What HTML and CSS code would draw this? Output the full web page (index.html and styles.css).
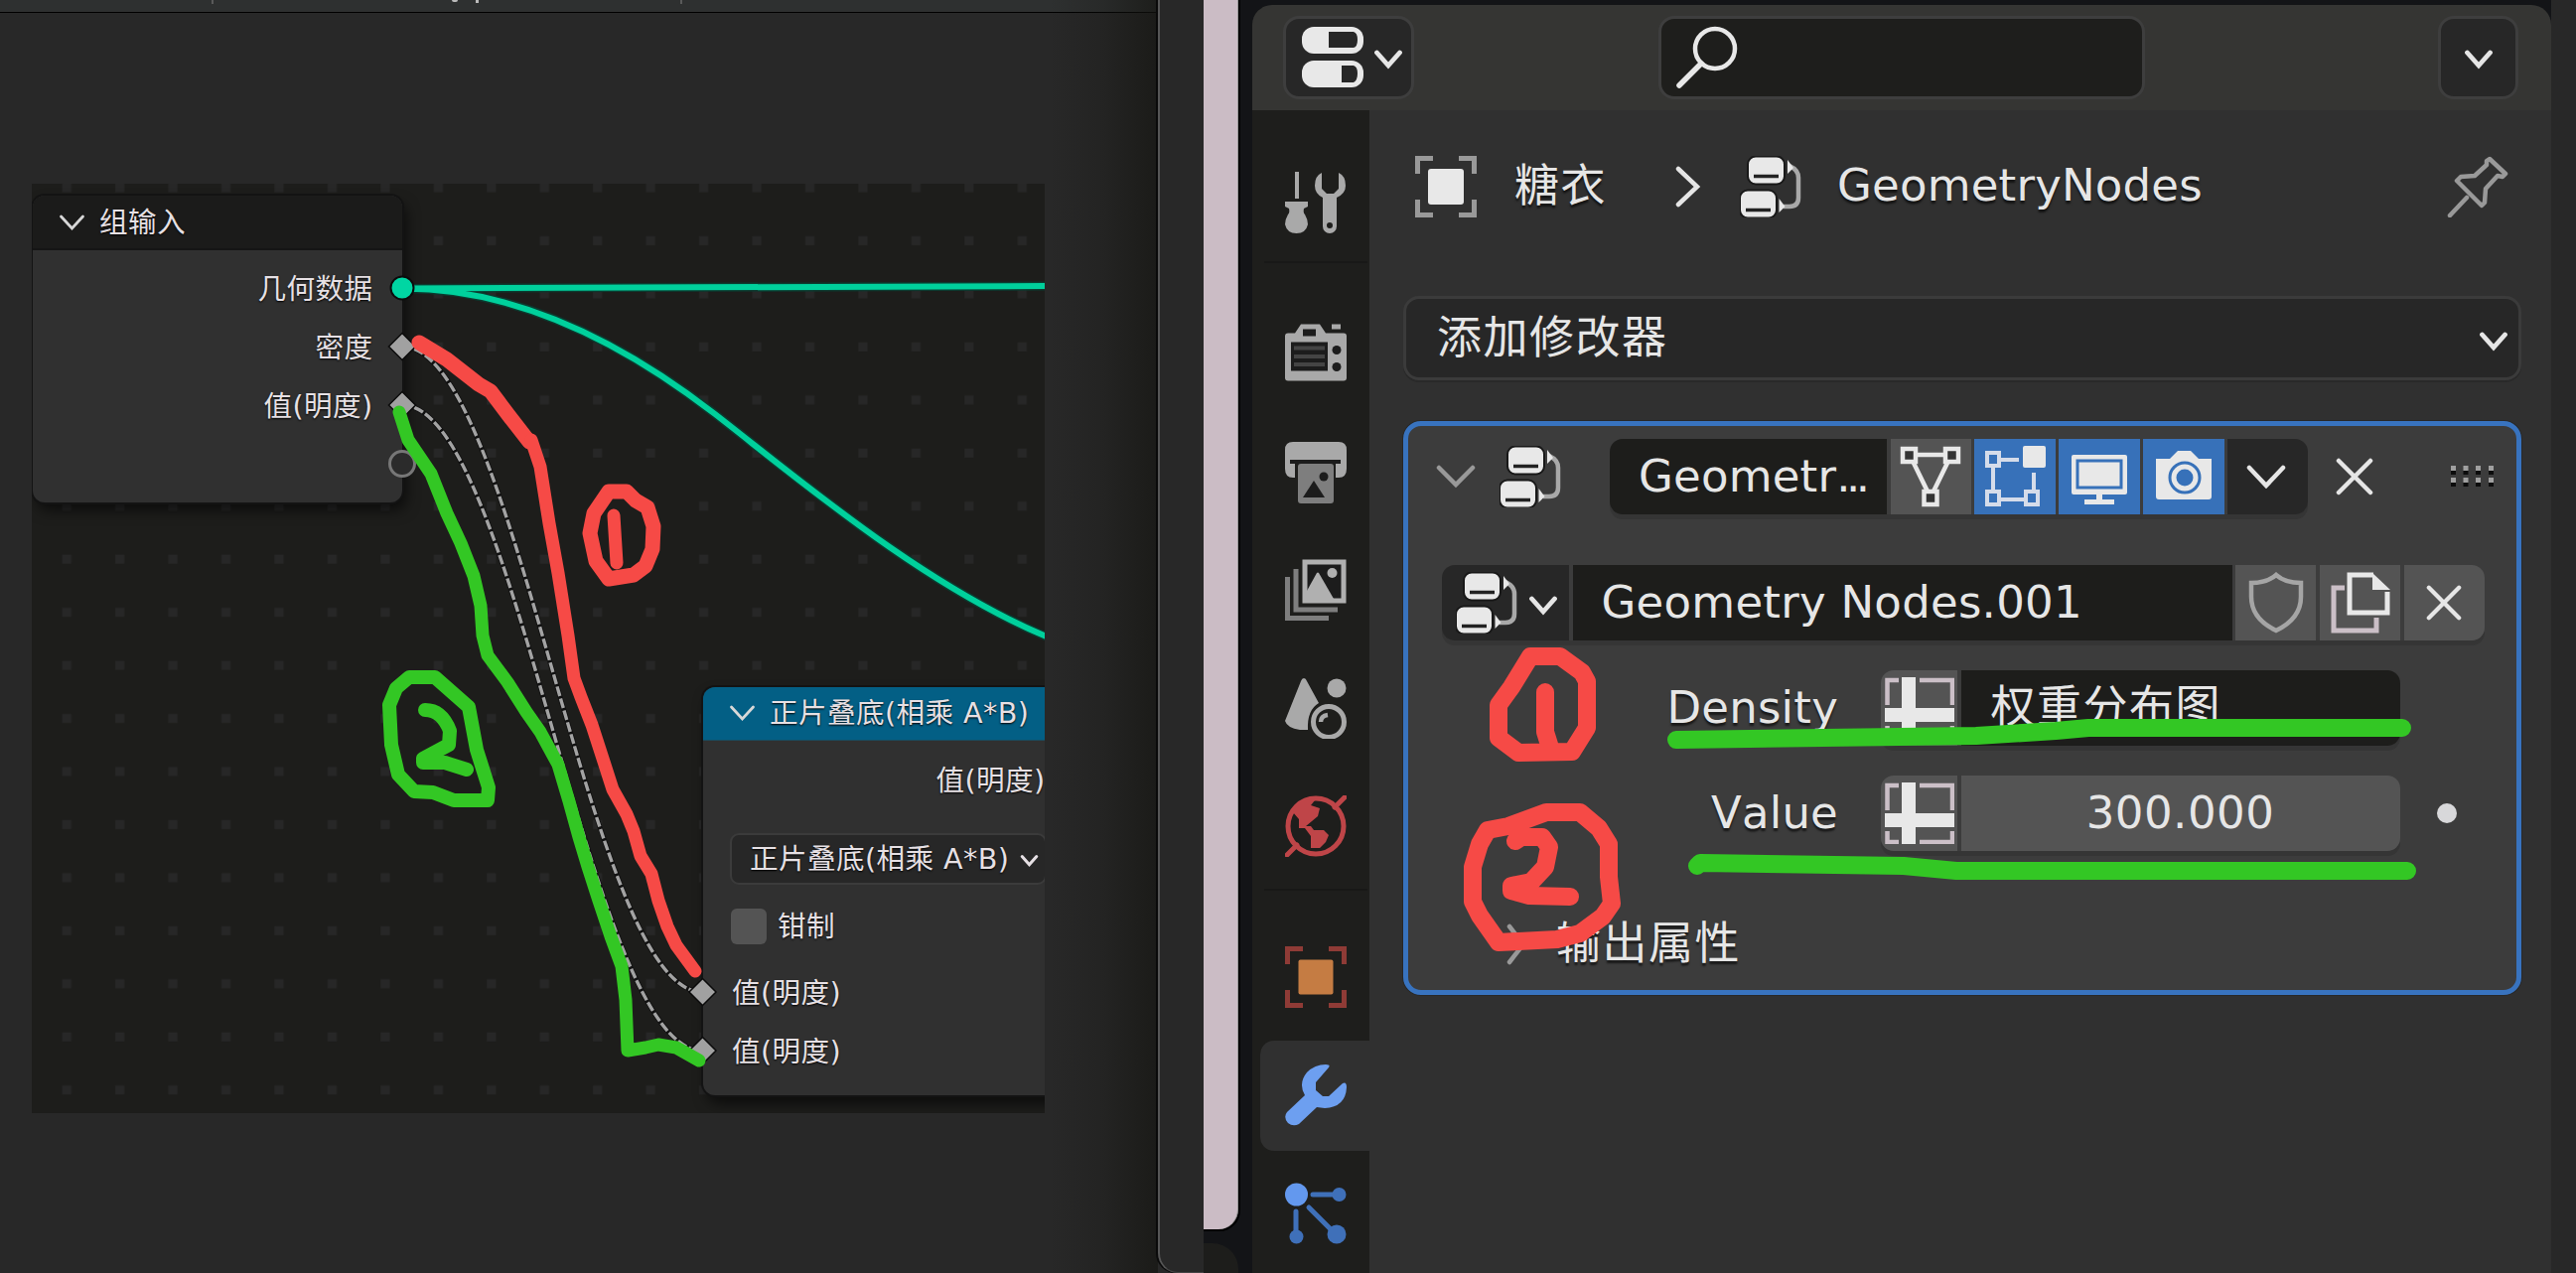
FILE: index.html
```html
<!DOCTYPE html>
<html lang="zh-CN">
<head>
<meta charset="utf-8">
<title>GeometryNodes</title>
<link rel="stylesheet" href="styles.css">
</head>
<body>
<svg class="defs" width="0" height="0">
  <defs>
    <symbol id="i-nodes" viewBox="0 0 62 62">
      <path d="M50 10q9 4 9 12v20q0 9-9 9h-6" fill="none" stroke="#a9a9a9" stroke-width="4.500"/>
      <g fill="#e8e8e8" stroke="#181818" stroke-width="2">
        <rect x="8" y="0.500" width="37" height="28" rx="8"/>
        <rect x="0" y="34.500" width="37" height="28" rx="8"/>
      </g>
      <path d="M14 20.500h25M6 54.500h25" stroke="#222" stroke-width="3.500"/>
      <path d="M48 4v14l6-6zM39.500 43v14l6-6z" fill="#e8e8e8"/>
    </symbol>
    <symbol id="i-chev" viewBox="0 0 30 20">
      <path d="M3.500 3l11.500 13L26.500 3" fill="none" stroke="currentColor" stroke-width="4.800" stroke-linecap="round"/>
    </symbol>
    <symbol id="i-fold" viewBox="0 0 27 18">
      <path d="M2.500 3l11 12L24.500 3" fill="none" stroke="#d8d8d8" stroke-width="2.800" stroke-linecap="round"/>
    </symbol>
    <symbol id="i-x" viewBox="0 0 38 38">
      <path d="M3 3l32 32M35 3L3 35" fill="none" stroke="#e6e6e6" stroke-width="4.500" stroke-linecap="round"/>
    </symbol>
    <symbol id="i-attr" viewBox="0 0 70 62">
      <path d="M14 3H2.500V28M35 3h33v25M2.500 49v11H14M35 60h33V49" fill="none" stroke="#cbbfc7" stroke-width="4.500"/>
      <path d="M17 0h14v62H17zM0 31h70v14H0z" fill="#e8e8e8"/>
    </symbol>
  </defs>
</svg>
<div class="desktop">
  <section class="editor">
    <div class="editor-bar"><i class="tick t1"></i><i class="tick t2"></i><i class="stub s1"></i><i class="stub s2"></i></div>
    <div class="canvas">
      <svg class="dots" width="1020" height="936">
        <defs><pattern id="grid" x="4.700" y="-22" width="53.450" height="53.450" patternUnits="userSpaceOnUse"><rect x="26" y="21.500" width="9" height="9" fill="#272727"/></pattern></defs>
        <rect width="1020" height="936" fill="url(#grid)"/>
      </svg>
      <div class="node node-input">
        <div class="node-head"><svg class="nchev"><use href="#i-fold"/></svg>组输入</div>
        <div class="node-body">
          <div class="out">几何数据</div>
          <div class="out">密度</div>
          <div class="out">值(明度)</div>
        </div>
      </div>
      <div class="node node-math">
        <div class="node-head blue"><svg class="nchev"><use href="#i-fold"/></svg>正片叠底(相乘 A*B)</div>
        <div class="node-body">
          <div class="out">值(明度)</div>
          <div class="select"><span>正片叠底(相乘 A*B)</span><svg class="schev"><use href="#i-chev"/></svg></div>
          <div class="check"><i></i>钳制</div>
          <div class="in">值(明度)</div>
          <div class="in">值(明度)</div>
        </div>
      </div>
      <svg class="links" width="1020" height="936" viewBox="32 185 1020 936" fill="none">
        <g stroke="#0b3a2f" stroke-width="9"><path d="M405 290.500L1056 288"/><path d="M405 290.500C530 290 640 355 720 417S930 590 1056 642"/></g>
        <g stroke="#00d09c" stroke-width="6"><path d="M405 290.500L1056 288"/><path d="M405 290.500C530 290 640 355 720 417S930 590 1056 642"/></g>
        <g stroke="#111" stroke-width="5"><path d="M405 349C520 349 592 999 707 999"/><path d="M405 408C520 408 592 1058 707 1058"/></g>
        <g stroke="#a3a3a3" stroke-width="3.400" stroke-dasharray="10 2.500"><path d="M405 349C520 349 592 999 707 999"/><path d="M405 408C520 408 592 1058 707 1058"/></g>
        <circle cx="405" cy="290" r="11.500" fill="#00d6a3" stroke="#0c0c0c" stroke-width="2"/>
        <g fill="#a1a1a1" stroke="#0c0c0c" stroke-width="1.500"><path d="M405 335.500l13.500 13.500-13.500 13.500-13.500-13.500zM405 394.500l13.500 13.500-13.500 13.500-13.500-13.500zM707.500 985.500l13.500 13.500-13.500 13.500-13.500-13.500zM707.500 1044.500l13.500 13.500-13.500 13.500-13.500-13.500z"/></g>
        <circle cx="405" cy="467" r="12.500" fill="#2b2b2b" stroke="#777" stroke-width="3"/>
      </svg>
    </div>
    <div class="edge-shade"></div>
  </section>
  <div class="strip"></div>
  <div class="backdrop"><div class="pink"></div><div class="under"></div></div>
  <section class="props">
    <header class="bar">
      <div class="btn mode">
        <svg width="62" height="64" viewBox="0 0 62 64"><g fill="#e8e8e8"><rect y="1" width="62" height="27" rx="12"/><rect y="35" width="62" height="27" rx="12"/></g><path d="M27 6h25q4 1 4 8t-4 8H27zM40 40h12q4 1 4 8t-4 9H40z" fill="#272727"/></svg>
        <svg class="chev"><use href="#i-chev"/></svg>
      </div>
      <div class="btn search"><svg width="66" height="66" viewBox="0 0 66 66"><circle cx="40" cy="24" r="20" fill="none" stroke="#e8e8e8" stroke-width="4.500"/><path d="M26 39L4 61" stroke="#e8e8e8" stroke-width="5.500" stroke-linecap="round"/></svg></div>
      <div class="btn opts"><svg class="chev"><use href="#i-chev"/></svg></div>
    </header>
    <div class="main">
      <nav class="tabs">
        <div class="tab"><svg viewBox="0 0 62 62" fill="#a9a9a9"><path d="M10 0h4v27h-4zM0 30h23v5l-4 2q-1 4 1 6 3 5 3 10-2 9-11.500 9T0 53q0-5 3-10 2-2 1-6l-4-2z"/><path d="M37 1q-7 3-7 13 0 8 8 12v29a7 7 0 0014 0V26q9-4 9-12 0-10-7-13v16l-5 5h-7l-5-5zM45 51a3 3 0 110 6 3 3 0 010-6" fill-rule="evenodd"/></svg></div>
        <hr class="h1">
        <div class="tab"><svg viewBox="0 2.500 62 62"><path d="M3 12h7l6-9h19l6 9h18q3 0 3 3v42q0 3-3 3H3q-3 0-3-3V15q0-3 3-3z" fill="#a9a9a9"/><path d="M47 3h9v5h-9z" fill="#a9a9a9"/><path d="M18 8h13v7H18zM6 21h37v29H6z" fill="#1c1c1c"/><path d="M9 27h31M9 35.500h31M9 43.500h31" stroke="#444" stroke-width="4"/><circle cx="52" cy="29" r="4.500" fill="#1c1c1c"/><circle cx="52" cy="46" r="4.500" fill="#1c1c1c"/></svg></div>
        <div class="tab"><svg viewBox="0 0 62 62"><path d="M8 0h46q8 0 8 8v19q0 9-8 9h-3V20H10v16H8q-8 0-8-9V8q0-8 8-8z" fill="#a9a9a9"/><rect x="5" y="18" width="51" height="4" fill="#1c1c1c"/><rect x="13" y="22" width="36" height="40" rx="3" fill="#7e7e7e"/><path d="M29 39l11 17H18z" fill="#1c1c1c"/><circle cx="39" cy="35" r="4.500" fill="#1c1c1c"/></svg></div>
        <div class="tab"><svg viewBox="0 0 62 62"><path d="M2.500 18v41.500H44M11 10v41h42" fill="none" stroke="#7e7e7e" stroke-width="5"/><rect x="20" y="3" width="39" height="39" fill="#1c1c1c" stroke="#b0b0b0" stroke-width="5"/><path d="M22 32l10-18q1-1 2 0l15 26H22z" fill="#b0b0b0"/><circle cx="47.500" cy="14" r="5" fill="#b0b0b0"/></svg></div>
        <div class="tab"><svg viewBox="0 0 62 62"><path d="M19 1q2 0 3 3l12 22q-12 7-11 27H15Q2 51 0 44L16 4q1-3 3-3z" fill="#a9a9a9"/><circle cx="52" cy="11" r="9.500" fill="#a9a9a9"/><circle cx="44" cy="45" r="15.500" fill="none" stroke="#a9a9a9" stroke-width="5"/><path d="M36 45q0-6 7-7" fill="none" stroke="#a9a9a9" stroke-width="4.500"/></svg></div>
        <div class="tab"><svg viewBox="0 0 62 62"><circle cx="31" cy="31" r="28" fill="none" stroke="#bf4548" stroke-width="5"/><path d="M50 12L60 2M12 50L2 60" stroke="#bf4548" stroke-width="5" stroke-linecap="round"/><path d="M8 17L18 5h12l-4 5 9 3-2 8-12 10h5l3 4h10l5 5-3 7-6 6h-9V41l-6-8h-6V24z" fill="#bf4548"/></svg></div>
        <hr class="h2">
        <div class="tab"><svg viewBox="0 0 62 62"><path d="M2.500 18V2.500H18M44 2.500h15.500V18M59.500 44v15.500H44M18 59.500H2.500V44" fill="none" stroke="#8f3b36" stroke-width="5"/><rect x="13.500" y="13.500" width="35" height="35" rx="2" fill="#c57c43"/></svg></div>
        <div class="tab active"><svg viewBox="0 0 62 62"><path d="M44 3L31 18v8l7 6h6L58 19q4-2 4 4-1 20-22 21l-8-1L14 60Q8 63 3 59-2 53 2 48L20 31q-7-12 2-23Q30 0 41 0q5 0 3 3z" fill="#6d9ff0"/></svg></div>
        <div class="tab"><svg viewBox="0 0 62 62"><path d="M28 12h24M11 29v24M24 25l28 28" stroke="#3f70b9" stroke-width="5" stroke-linecap="round"/><circle cx="11.500" cy="12" r="11.500" fill="#6398ee"/><g fill="#3f70b9"><circle cx="54.500" cy="12" r="7"/><circle cx="11.500" cy="54.500" r="7"/><circle cx="52" cy="52" r="9.500"/></g></svg></div>
      </nav>
      <div class="content">
        <div class="crumbs">
          <svg width="62" height="62" viewBox="0 0 62 62"><path d="M2.500 18V2.500H18M44 2.500h15.500V18M59.500 44v15.500H44M18 59.500H2.500V44" fill="none" stroke="#999" stroke-width="5"/><rect x="13" y="13" width="36" height="36" rx="3" fill="#e8e8e8"/></svg>
          <span class="obj cjk">糖衣</span>
          <svg class="gt" width="26" height="42" viewBox="0 0 26 42"><path d="M3 3l19 18L3 39" fill="none" stroke="#e6e6e6" stroke-width="4.500" stroke-linecap="round"/></svg>
          <svg class="ncon" width="62" height="62"><use href="#i-nodes"/></svg>
          <span class="mod">GeometryNodes</span>
          <svg class="pin" width="62" height="62" viewBox="0 0 62 62"><path d="M43 3L59 18l-3 3-5-1-12 13-1 14-3 3L10 25l4-4 14-1L40 9V5zM20 42L3 60" fill="none" stroke="#999" stroke-width="4.500" stroke-linecap="round" stroke-linejoin="round"/></svg>
        </div>
        <div class="add cjk"><span>添加修改器</span><svg class="chev"><use href="#i-chev"/></svg></div>
        <div class="panel">
          <div class="row r1">
            <svg class="fold" width="40" height="24" viewBox="0 0 40 24"><path d="M3 3l17 17L37 3" fill="none" stroke="#999" stroke-width="4.500" stroke-linecap="round"/></svg>
            <svg class="ncon" width="62" height="62"><use href="#i-nodes"/></svg>
            <div class="group g1">
              <div class="cell dark name">Geometr<span class="cut">...</span></div>
              <div class="cell grey"><svg width="62" height="62" viewBox="0 0 62 62"><path d="M10 9h42L31 52z" fill="none" stroke="#e8e8e8" stroke-width="4.500"/><g fill="#333" stroke="#e8e8e8" stroke-width="4.500"><path d="M3 3h13v13H3zM46 3h13v13H46zM24.500 46h13v13h-13z"/></g></svg></div>
              <div class="cell sel"><svg width="62" height="62" viewBox="0 0 62 62"><path d="M10 14h25M9 14v42M10 54h38M50 27v27" fill="none" stroke="#d5dcea" stroke-width="4"/><g fill="#3771b9" stroke="#d5dcea" stroke-width="4"><path d="M3 7h12v13H3zM3 46h12v13H3zM42 46h12v13H42z"/></g><rect x="39" y="0" width="23" height="22" rx="2" fill="#e8e8e8"/></svg></div>
              <div class="cell sel"><svg width="62" height="62" viewBox="0 0 62 62"><rect x="3" y="9" width="56" height="40" rx="2" fill="#e8e8e8"/><rect x="9" y="15" width="44" height="27" fill="none" stroke="#3771b9" stroke-width="3"/><path d="M28 48h6v6h12v5H16v-5h12z" fill="#e8e8e8"/></svg></div>
              <div class="cell sel"><svg width="62" height="62" viewBox="0 0 62 62"><path d="M3 13h14l8-8h13l8 8h13v38q0 3-3 3H6q-3 0-3-3z" fill="#e8e8e8"/><circle cx="32" cy="32" r="15" fill="none" stroke="#3771b9" stroke-width="3"/><circle cx="32" cy="32" r="8.500" fill="#3771b9"/></svg></div>
              <div class="cell drop"><svg width="40" height="24" viewBox="0 0 40 24"><path d="M3 3l17 18L37 3" fill="none" stroke="#e6e6e6" stroke-width="4.500" stroke-linecap="round"/></svg></div>
            </div>
            <svg class="close" width="38" height="38"><use href="#i-x"/></svg>
            <svg class="grip" width="46" height="24" viewBox="0 0 46 24"><g fill="#0c0c0c"><path d="M1 6h5v4H1zM13.500 6h5v4h-5zM26 6h5v4h-5zM39 6h5v4h-5zM1 18h5v4H1zM13.500 18h5v4h-5zM26 18h5v4h-5zM39 18h5v4h-5z"/></g><g fill="#a0a0a0"><path d="M1 1h5v5H1zM13.500 1h5v5h-5zM26 1h5v5h-5zM39 1h5v5h-5zM1 13h5v5H1zM13.500 13h5v5h-5zM26 13h5v5h-5zM39 13h5v5h-5z"/></g></svg>
          </div>
          <div class="row r2">
            <div class="group g2">
              <div class="cell pick"><svg width="62" height="62"><use href="#i-nodes"/></svg><svg class="chev"><use href="#i-chev"/></svg></div>
              <div class="cell dark tree">Geometry Nodes.001</div>
              <div class="cell grey"><svg width="56" height="62" viewBox="0 0 56 62"><path d="M28 3q9 8 25 8v14q0 22-25 34Q3 47 3 25V11q16 0 25-8z" fill="none" stroke="#a5a5a5" stroke-width="4.500"/></svg></div>
              <div class="cell grey"><svg width="62" height="62" viewBox="0 0 62 62"><path d="M15 16H4v43h43V46" fill="none" stroke="#cbbfc7" stroke-width="5"/><path d="M44 3H20v38h38V20" fill="none" stroke="#e8e8e8" stroke-width="5"/><path d="M43 1l18 17H43z" fill="#e8e8e8"/></svg></div>
              <div class="cell grey last"><svg width="36" height="36"><use href="#i-x"/></svg></div>
            </div>
          </div>
          <div class="row r3">
            <label>Density</label>
            <div class="group"><div class="cell grey attr"><svg width="70" height="62"><use href="#i-attr"/></svg></div><div class="cell dark val cjk">权重分布图</div></div>
          </div>
          <div class="row r4">
            <label>Value</label>
            <div class="group"><div class="cell grey attr"><svg width="70" height="62"><use href="#i-attr"/></svg></div><div class="cell grey num">300.000</div></div>
            <i class="dot"></i>
          </div>
          <div class="row r5">
            <svg width="22" height="42" viewBox="0 0 22 42"><path d="M3 3l14 18L3 39" fill="none" stroke="#999" stroke-width="4.500" stroke-linecap="round"/></svg>
            <span class="cjk">输出属性</span>
          </div>
        </div>
      </div>
    </div>
  </section>
  <svg class="marks" width="2594" height="1282" viewBox="0 0 2594 1282" fill="none" stroke-linecap="round" stroke-linejoin="round">
    <g stroke="#f64a46" stroke-width="13">
      <path stroke-width="15" d="M422 345L450 362 482 387 494 394 512 418 533 445"/>
      <path d="M535 443L544 470 553 527 562 577 572 640 578 683 585 702 596 730 608 767 617 795 631 820 638 837 645 862 656 880 663 907 672 933 681 952 700 978"/>
      <path stroke-width="15" d="M613 495L631 495 640 504 652 511 658 530 657 553 650 570 638 579 613 583 600 565 594 537 598 517z"/>
      <path d="M618 519L621 567"/>
    </g>
    <g stroke="#33c724" stroke-width="13">
      <path d="M402 415L411 443 434 477 450 517 464 547 477 580 484 610 486 640 491 660 511 687 530 717 544 737 562 770 573 807 583 843 592 873 603 907 615 943 626 973 630 1007 632 1058 650 1055 663 1052 681 1055 704 1068"/>
      <path stroke-width="14" d="M412 682L438 682 472 712 480 755 492 793 491 806 457 806 436 798 417 797 401 780 394 750 392 710 399 693z"/>
      <path stroke-width="14" d="M428 715Q445 715 453 736L452 750 426 764 426 768 448 768 470 775"/>
    </g>
    <g stroke="#33c724" stroke-width="18">
      <path d="M1688 745L1990 741 2070 736 2103 733H2419"/>
      <path d="M1709 872L1712 869 1917 872 1970 877H2424"/>
    </g>
    <g stroke="#f64a46" stroke-width="18">
      <path d="M1541 661L1571 661 1593 677 1598 686 1598 733 1583 757 1529 758 1509 743 1509 710 1522 692zM1556 697L1556 737 1561 753"/>
      <path d="M1498 836L1519 832 1557 818 1591 818 1610 834 1620 850 1620 883 1623 910 1614 923 1591 940 1568 946 1509 949 1490 922 1483 908 1483 873 1490 850zM1526 847L1532 843 1553 843 1560 853 1556 873 1542 888 1522 892 1522 897 1540 902 1581 903"/>
    </g>
  </svg>
</div>
</body>
</html>
```
FILE: styles.css
```css
* { box-sizing: border-box; }
body { margin: 0; background: #282828; }
.defs { position: absolute; }
.desktop {
  position: relative; display: flex; width: 2594px; height: 1282px; overflow: hidden;
  background: #282828; color: #e6e6e6;
  font: 45px/60px "DejaVu Sans", "Noto Sans CJK SC", sans-serif;
  font-kerning: none; letter-spacing: .2px;
}
svg { flex: none; display: block; }
.chev { width: 30px; height: 20px; color: #e6e6e6; }
.cjk { letter-spacing: 1.5px; }

/* node editor */
.editor { position: relative; width: 1166px; flex: none; background: #282828; }
.editor-bar { position: relative; height: 13px; background: #2e3030; border-bottom: 1px solid #000; }
.tick { position: absolute; top: 0; width: 2px; height: 4px; background: #5a5a5a; }
.t1 { left: 213px; }
.t2 { left: 685px; }
.stub { position: absolute; top: 0; background: #bbb; }
.s1 { left: 455px; width: 6px; height: 2px; border-radius: 0 0 3px 3px; }
.s2 { left: 479px; width: 3px; height: 3px; }
.edge-shade { position: absolute; inset: 0 0 0 auto; width: 110px; background: linear-gradient(90deg, rgba(20,20,16,0), rgba(20,20,16,.22) 50%, rgba(20,20,16,.65)); }
.canvas {
  position: relative; width: 1020px; height: 936px; margin: 172px 0 0 32px; overflow: hidden;
  background: #1d1d1b; font-size: 28.600px; line-height: 40px; letter-spacing: .400px;
}
.dots, .links { position: absolute; left: 0; top: 0; }
.node {
  position: absolute; border-radius: 12px; background: #303030; color: #e6e0e4;
  box-shadow: 0 0 0 2px #131313, 4px 8px 14px rgba(0,0,0,.6); text-shadow: 0 1px 2px #000;
}
.node-input { left: 1px; top: 12px; width: 372px; height: 309px; }
.node-math { left: 676px; top: 507px; width: 374px; height: 411px; }
.node-head { display: flex; align-items: center; gap: 14px; height: 55px; padding-left: 26px; border-radius: 12px 12px 0 0; background: #1b1b1a; border-bottom: 2px solid #151515; }
.node-head.blue { height: 54px; padding-bottom: 2px; background: #035f85; border-color: #1b4a5c; border-width: 1px; }
.nchev { width: 27px; height: 18px; }
.node-body { padding-top: 10px; }
.node-input .node-body { padding-top: 9px; }
.out, .in, .check { display: flex; align-items: center; height: 59px; }
.out { justify-content: flex-end; padding-right: 29.500px; }
.in { padding-left: 29px; }
.select { display: flex; align-items: center; gap: 11px; width: 319px; height: 52px; margin: 24px 0 0 27px; padding-left: 18px; border: 2px solid #3b3b3b; border-radius: 9px; background: #272727; }
.schev { width: 19px; height: 14px; margin-top: 3px; }
.check { gap: 11px; margin: 12px 0 8px; padding-left: 28px; }
.check i { width: 36px; height: 36px; border-radius: 6px; background: #545454; }

/* windows between the editors */
.strip { width: 46px; flex: none; background: #282828; border-left: 2px solid #565656; border-bottom: 1px solid #454545; border-radius: 0 0 0 20px; box-shadow: -2px 0 0 #0a0a0a; z-index: 1; }
.backdrop { width: 49px; flex: none; background: #131417; }
.pink { width: 35px; height: 1238px; background: #cbbcc5; border-right: 1px solid #999; border-radius: 0 0 20px 0; box-shadow: 1px 1px 0 1px #000; }
.under { width: 35px; height: 30px; margin-top: 14px; background: #1d1d1b; border-radius: 0 26px 0 0; }

/* properties editor */
.props { display: flex; flex-direction: column; width: 1319px; padding: 5px 11px 0 0; flex: none; margin-right: -11px; background: linear-gradient(#131417 30px, transparent 30px); background-size: 1308px 100%; background-repeat: no-repeat; }
.bar { display: flex; align-items: center; flex: none; height: 106px; padding: 0 33px 0 31px; background: #353533; border-radius: 20px 20px 0 0; }
.btn { display: flex; align-items: center; height: 84px; border: 3px solid #3e3e3e; border-radius: 16px; background: #272727; }
.btn .chev { margin-top: 4px; }
.mode { width: 132px; padding-left: 16px; gap: 10px; }
.search { width: 490px; margin-left: 246px; padding-left: 14px; background: #1e1e1c; }
.opts { width: 81px; margin-left: auto; justify-content: center; }
.main { display: flex; flex: 1; min-height: 0; overflow: hidden; }
.tabs { width: 118px; padding-top: 34px; background: #1e1e1c; }
.tabs hr { height: 2px; margin: 1px 2px 0 12px; border: 0; background: #181817; }
.tabs .h1 { margin-top: -5px; margin-bottom: 37px; }
.tabs .h2 { margin-bottom: 32px; }
.tab { display: flex; align-items: center; height: 110.700px; margin: 0 0 8px 8px; padding-left: 25px; }
.tab:first-child { margin-top: 4px; }
.tab svg { width: 62px; height: 62px; }
.tab.active { background: #303030; border-radius: 14px 0 0 14px; }
.content { flex: 1; background: #303030; padding: 46px 30px 0 34px; }
.crumbs { display: flex; align-items: center; height: 62px; padding-left: 12px; text-shadow: 0 3px 2px rgba(0,0,0,.6); }
.obj { margin-left: 38px; width: 95px; }
.gt { margin-left: 67px; }
.crumbs .ncon { margin-left: 39px; }
.mod { margin-left: 36px; line-height: 58px; padding-bottom: 2px; }
.pin { margin: 0 13px 0 auto; }
.add { display: flex; align-items: center; justify-content: space-between; height: 85px; margin-top: 79px; padding: 0 10px 0 31px; border: 3px solid #3b3b3b; border-radius: 16px; background: #272727; box-shadow: 0 2px 0 #292929; }
.add .chev { margin-top: 6px; }
.panel { height: 578px; margin-top: 41px; padding: 13px 0 0; border: 5px solid #3873bf; border-radius: 18px; background: #3c3c3c; box-shadow: 0 0 0 1px #282828; }
.row { display: flex; align-items: center; height: 76px; }
.group { display: flex; gap: 3.500px; height: 76px; border-radius: 13px; box-shadow: 0 5px 0 #353535; }
.cell { display: flex; align-items: center; justify-content: center; width: 81.400px; }
.cell:first-child { border-radius: 13px 0 0 13px; }
.cell:last-child { border-radius: 0 13px 13px 0; }
.dark { background: #1d1d1b; justify-content: flex-start; }
.grey { background: #545454; }
.sel { background: #3771b9; }
.drop, .pick { background: #272727; }
.r1 { padding-left: 28px; }
.r1 .ncon { margin-left: 24px; }
.g1 { margin-left: 49px; }
.name { width: 279px; padding-left: 29px; }
.cut { letter-spacing: -4.500px; }
.drop { padding-right: 3px; }
.close { margin-left: 28px; }
.grip { margin-left: 77px; }
.r2 { margin-top: 51px; padding-left: 34px; }
.pick { width: 128px; gap: 11px; padding-left: 3px; }
.pick .chev { margin-top: 6px; }
.tree { width: 664px; padding-left: 29px; letter-spacing: .250px; }
.r3 { margin-top: 30px; }
.r4 { margin-top: 30px; }
.row label { width: 433px; margin-right: 43px; text-align: right; text-shadow: 0 3px 2px rgba(0,0,0,.6); }
.attr { width: 77px; }
.val { width: 442px; padding-left: 30px; }
.num { width: 442px; letter-spacing: .500px; }
.dot { width: 20px; height: 20px; margin-left: 37px; border-radius: 50%; background: #d8d8da; }
.r5 { margin-top: 56px; padding-left: 99px; gap: 28px; text-shadow: 0 3px 2px rgba(0,0,0,.6); }
.marks { position: absolute; left: 0; top: 0; z-index: 2; }
```
